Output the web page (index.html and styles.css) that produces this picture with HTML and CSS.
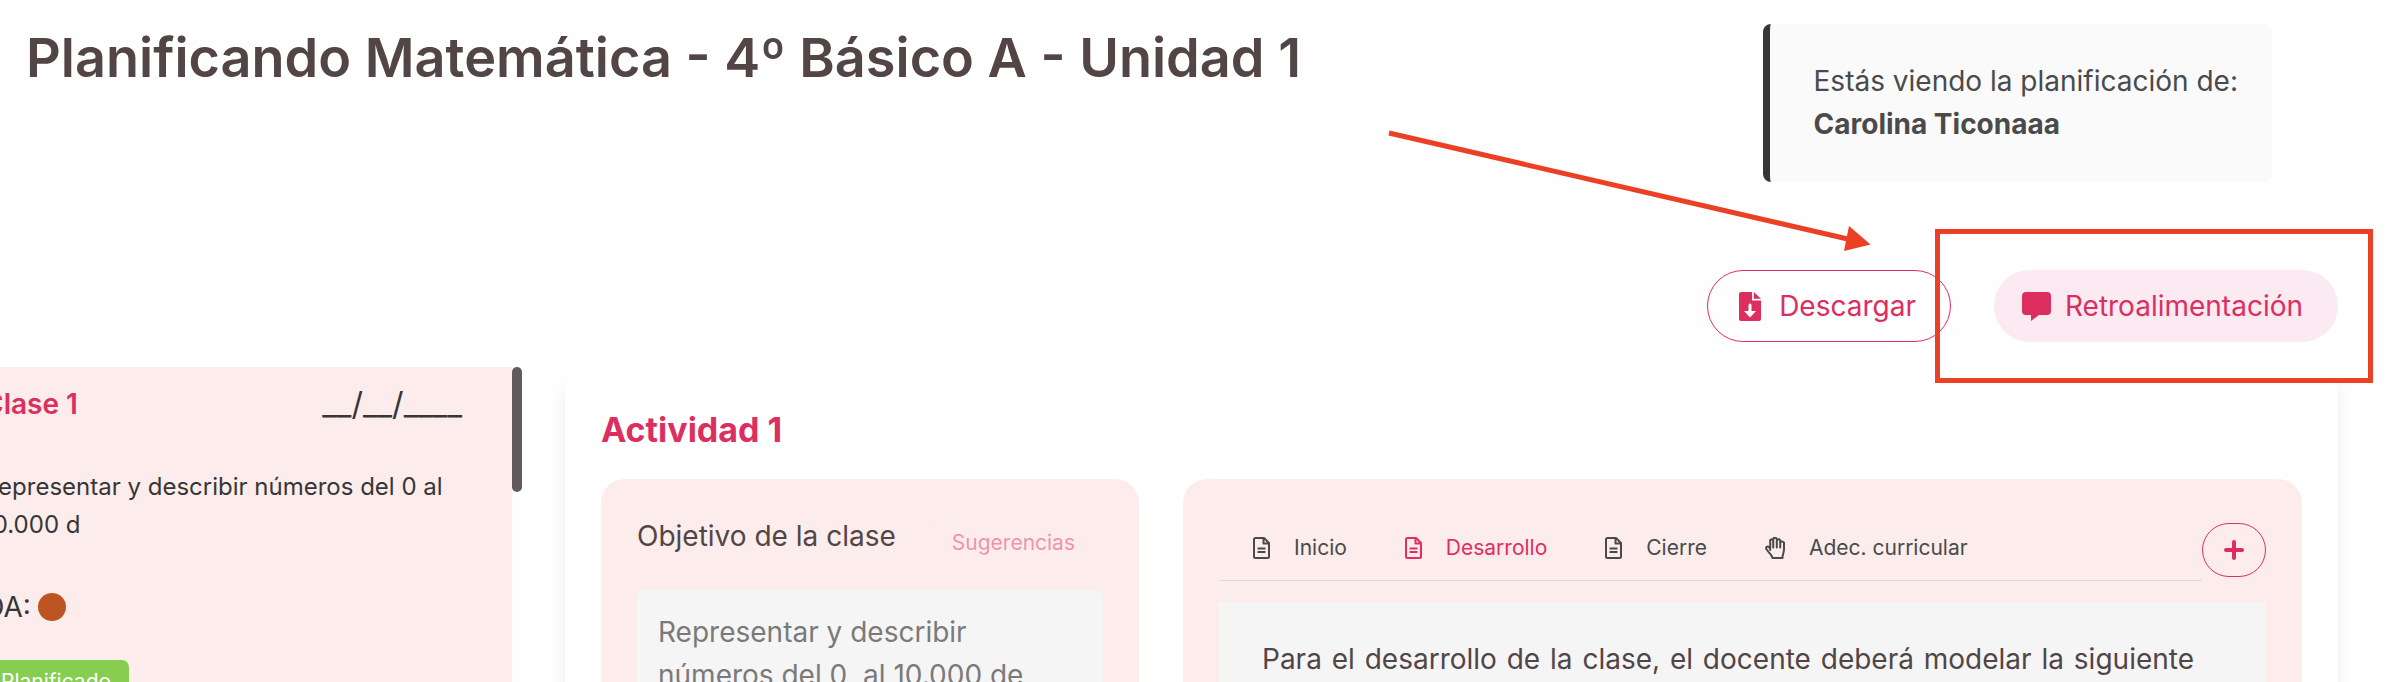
FILE: index.html
```html
<!DOCTYPE html>
<html lang="es">
<head>
<meta charset="utf-8">
<meta name="viewport" content="width=device-width, initial-scale=1">
<title>Planificando Matemática</title>
<link rel="stylesheet" href="styles.css">
</head>
<body>
<svg class="sprite" aria-hidden="true">
  <symbol id="icon-doc" viewBox="0 0 17 22">
    <path d="M2.500 1H11L16 6V19.500A1.500 1.500 0 0 1 14.500 21H2.500A1.500 1.500 0 0 1 1 19.500V2.500A1.500 1.500 0 0 1 2.500 1ZM10.500 1V6.500H16" fill="none" stroke="currentColor" stroke-width="2" stroke-linejoin="round"/>
    <path d="M4.500 11.500H12.500M4.500 15H12.500" fill="none" stroke="currentColor" stroke-width="2"/>
  </symbol>
</svg>
<div class="page">
  <header class="header">
    <h1 class="title">Planificando Matemática - 4º Básico A - Unidad 1</h1>
    <aside class="notice">
      <p class="notice-text">Estás viendo la planificación de:</p>
      <p class="notice-text"><strong>Carolina Ticonaaa</strong></p>
    </aside>
  </header>

  <div class="actions">
    <button class="pill pill-outline" type="button">
      <svg class="pill-icon-file" viewBox="0 0 22 29" aria-hidden="true">
        <path d="M2 0H13V8.500H22V27A2 2 0 0 1 20 29H2A2 2 0 0 1 0 27V2A2 2 0 0 1 2 0ZM9.500 13V19H5L11 25.500L17 19H12.500V13A1.500 1.500 0 0 0 9.500 13Z" fill="currentColor" fill-rule="evenodd"/>
        <path d="M14.800 0L22 6.700H14.800Z" fill="currentColor"/>
      </svg>
      <span>Descargar</span>
    </button>
    <div class="callout">
      <button class="pill pill-soft" type="button">
        <svg class="pill-icon-chat" viewBox="0 0 29 29" aria-hidden="true">
          <path d="M4 0H25A4 4 0 0 1 29 4V19A4 4 0 0 1 25 23H17L9 29V23H4A4 4 0 0 1 0 19V4A4 4 0 0 1 4 0Z" fill="currentColor"/>
        </svg>
        <span>Retroalimentación</span>
      </button>
      <span class="callout-frame"></span>
      <svg class="callout-arrow" viewBox="0 0 484 122" aria-hidden="true">
        <path d="M1 5L464 112" stroke="currentColor" stroke-width="5" fill="none"/>
        <path d="M461 98L482.500 116.500L456 123Z" fill="currentColor"/>
      </svg>
    </div>
  </div>

  <div class="workspace">
    <section class="sidebar">
      <div class="lesson">
        <div class="lesson-head">
          <h2 class="lesson-title">Clase 1</h2>
          <span class="lesson-date">__/__/____</span>
        </div>
        <p class="lesson-text">Representar y describir números del 0 al 10.000 d</p>
        <p class="lesson-goal">OA: <span class="dot"></span></p>
        <span class="badge">Planificado</span>
      </div>
      <div class="scroll-thumb"></div>
    </section>

    <main class="activity">
      <h2 class="activity-title">Actividad 1</h2>
      <div class="columns">
        <section class="card">
          <div class="card-head">
            <label class="card-label" for="objetivo">Objetivo de la clase</label>
            <button class="suggest" type="button">Sugerencias</button>
          </div>
          <textarea class="goal-box" id="objetivo">Representar y describir números del 0  al 10.000 de</textarea>
        </section>
        <section class="card">
          <div class="tab-row">
            <nav class="tabs">
              <button class="tab" type="button"><svg class="tab-icon" aria-hidden="true"><use href="#icon-doc"/></svg>Inicio</button>
              <button class="tab tab-active" type="button"><svg class="tab-icon" aria-hidden="true"><use href="#icon-doc"/></svg>Desarrollo</button>
              <button class="tab" type="button"><svg class="tab-icon" aria-hidden="true"><use href="#icon-doc"/></svg>Cierre</button>
              <button class="tab" type="button"><svg class="tab-hand" viewBox="0 0 20 22" aria-hidden="true">
                <path d="M5.200 13V4.500A1.500 1.500 0 0 1 8.200 3.500V2.500A1.500 1.500 0 0 1 11.800 2.500V3.500A1.500 1.500 0 0 1 15.200 4.500V6A1.500 1.500 0 0 1 19 7V12C19 16 17.500 17 17.500 21H7.500C7.500 19 5 17 3.200 14.500L1.300 12C.5 10.300 2.500 8.800 3.900 10L5.200 11.500M8.200 4V10.500M11.800 4V10.500M15.200 5.500V10.500" fill="none" stroke="currentColor" stroke-width="2" stroke-linejoin="round" stroke-linecap="round"/>
              </svg>Adec. curricular</button>
            </nav>
            <button class="add" type="button" aria-label="Agregar">
              <svg class="add-icon" viewBox="0 0 20 20" aria-hidden="true"><path d="M10 2V18M2 10H18" stroke="currentColor" stroke-width="4" stroke-linecap="round"/></svg>
            </button>
          </div>
          <div class="editor">
            <p class="editor-text">Para el desarrollo de la clase, el docente deberá modelar la siguiente</p>
          </div>
        </section>
      </div>
    </main>
  </div>
</div>
</body>
</html>
```

FILE: styles.css
```css
* { box-sizing: border-box; }

body {
  margin: 0;
  background: #fefefe;
  color: #363636;
  font-family: Inter, "Liberation Sans", sans-serif;
  font-size: 28px;
}

h1, h2, p { margin: 0; }

button, textarea { font: inherit; }

button {
  padding: 0;
  border: 0;
  background: none;
  color: inherit;
  cursor: pointer;
}

svg { flex: none; }

.sprite { position: absolute; width: 0; height: 0; }

.page {
  display: flex;
  flex-direction: column;
  height: 100vh;
  overflow: hidden;
}

.header {
  display: flex;
  justify-content: space-between;
  align-items: flex-start;
  padding: 24px 118px 0 26px;
}

.title {
  color: #524545;
  font-size: 54px;
  font-weight: 600;
  line-height: 68px;
}

.notice {
  padding: 36px 34px 36px 44px;
  border-left: 7px solid #363636;
  border-radius: 8px;
  background: #fafafa;
  color: #4a4a4a;
}

.notice-text { line-height: 43px; }

.actions {
  display: flex;
  justify-content: flex-end;
  gap: 43px;
  margin-top: 88px;
  padding-right: 52px;
}

.pill {
  display: flex;
  align-items: center;
  height: 72px;
  border-radius: 36px;
  color: #dc2f5f;
}

.pill-outline {
  gap: 18px;
  padding: 0 34px 0 31px;
  border: 1px solid #dc2f5f;
}

.pill-soft {
  gap: 14px;
  padding: 0 35px 0 28px;
  background: #fbeaf1;
}

.pill-icon-file { width: 22px; height: 29px; }
.pill-icon-chat { width: 29px; height: 29px; }

.callout { position: relative; }

.callout-frame {
  position: absolute;
  inset: -41px -35px -41px -59px;
  border: 5px solid #eb4025;
  pointer-events: none;
}

.callout-arrow {
  position: absolute;
  top: -142px;
  right: 466px;
  width: 484px;
  height: 122px;
  overflow: visible;
  color: #eb4025;
  pointer-events: none;
}

.workspace {
  display: flex;
  flex: 1;
  gap: 43px;
  min-height: 0;
  margin-top: 25px;
  padding-right: 52px;
}

.sidebar {
  display: flex;
  flex: none;
  width: 562px;
  margin-left: -40px;
}

.lesson {
  flex: 1;
  padding: 16px 50px 0 23px;
  background: #fcecec;
}

.lesson-head {
  display: flex;
  justify-content: space-between;
  line-height: 42px;
}

.lesson-title {
  color: #dc2f5f;
  font-size: 28px;
  font-weight: 600;
}

.lesson-date { font-size: 32px; }

.lesson-text {
  margin-top: 43px;
  font-size: 24px;
  line-height: 38px;
}

.lesson-goal {
  display: flex;
  align-items: center;
  gap: 7px;
  margin-top: 42px;
  line-height: 42px;
}

.dot {
  width: 28px;
  height: 28px;
  border-radius: 50%;
  background: #bd5522;
}

.badge {
  display: inline-block;
  margin-top: 32px;
  padding: 0 18px;
  border-radius: 7px;
  background: #87cd50;
  color: #fff;
  font-size: 21px;
  line-height: 44px;
}

.scroll-thumb {
  width: 10px;
  height: 125px;
  border-radius: 5px;
  background: #635b5b;
}

.activity {
  flex: 1;
  min-width: 0;
  min-height: 600px;
  padding: 42px 36px;
  border-radius: 24px;
  background: #fff;
  box-shadow: 0 12px 16px rgba(10, 10, 10, 0.08);
}

.activity-title {
  color: #dc2f5f;
  font-size: 34px;
  font-weight: 700;
  line-height: 42px;
}

.columns {
  display: grid;
  grid-template-columns: 538fr 1119fr;
  gap: 44px;
  margin-top: 28px;
}

.card {
  min-width: 0;
  min-height: 400px;
  padding: 36px;
  border-radius: 24px;
  background: #fcecec;
}

.card-head {
  display: flex;
  justify-content: space-between;
  align-items: flex-start;
}

.card-label {
  color: #524545;
  line-height: 42px;
}

.suggest {
  height: 54px;
  padding: 0 27px;
  border: 1px solid #f9eeed;
  border-radius: 27px;
  color: #ee94ae;
  font-size: 21px;
}

.goal-box {
  display: block;
  width: 100%;
  height: 240px;
  margin-top: 21px;
  padding: 21px;
  border: 0;
  border-radius: 8px;
  outline: 0;
  background: #f5f5f5;
  color: #7a7a7a;
  line-height: 43px;
  resize: none;
}

.tab-row {
  display: flex;
  align-items: flex-end;
  padding-top: 8px;
}

.tabs {
  display: flex;
  flex: 1;
  gap: 58px;
  height: 57px;
  padding: 0 34px 9px;
  border-bottom: 1px solid #dbdbdb;
}

.tab {
  display: flex;
  align-items: center;
  gap: 24px;
  color: #4a4a4a;
  font-size: 21px;
}

.tab-active { color: #e22d61; }

.tab-icon { width: 17px; height: 22px; }
.tab-hand { width: 20px; height: 22px; }

.add {
  display: grid;
  place-items: center;
  width: 64px;
  height: 54px;
  margin-bottom: 4px;
  border: 1px solid #dc2f5f;
  border-radius: 27px;
  color: #dc2f5f;
}

.add-icon { width: 20px; height: 20px; }

.editor {
  height: 240px;
  margin-top: 21px;
  padding: 36px 72px 0 43px;
  background: #f5f5f5;
}

.editor-text {
  color: #524545;
  line-height: 42px;
  text-align: justify;
  text-align-last: justify;
}
```
